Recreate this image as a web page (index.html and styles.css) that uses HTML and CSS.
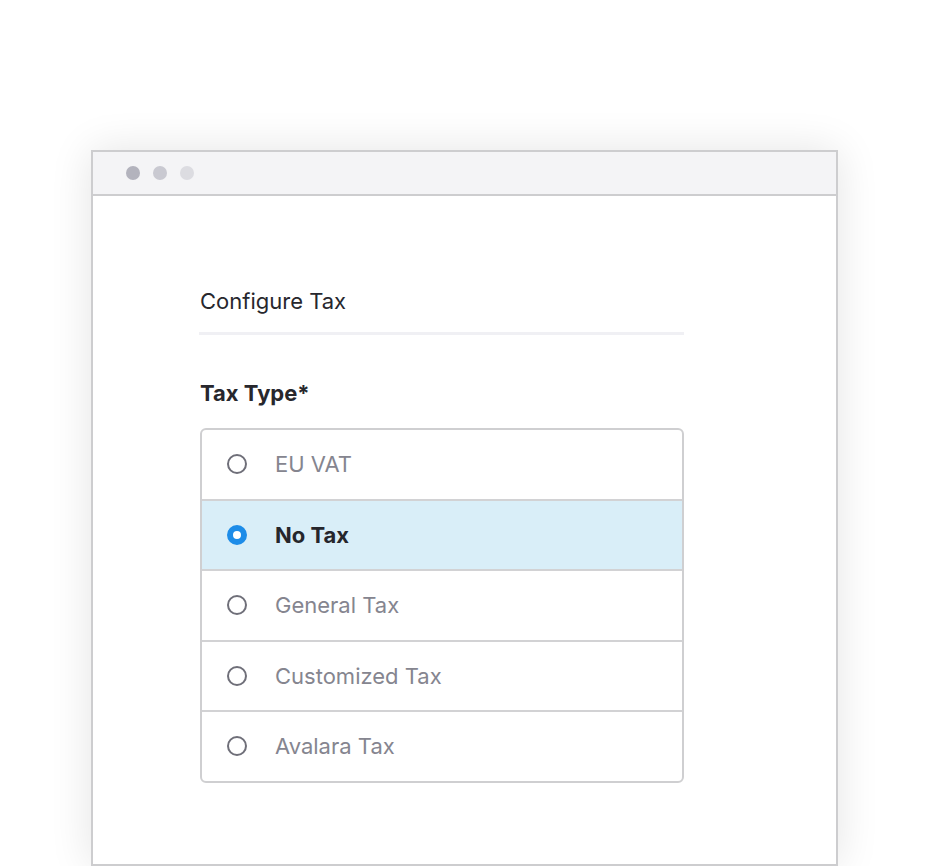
FILE: index.html
```html
<!DOCTYPE html>
<html lang="en">
<head>
<meta charset="utf-8">
<title>Configure Tax</title>
<link rel="stylesheet" href="styles.css">
</head>
<body>
<div class="window">
  <div class="titlebar">
    <span class="dot dot-1"></span>
    <span class="dot dot-2"></span>
    <span class="dot dot-3"></span>
  </div>
  <div class="content">
    <div class="section-title">Configure Tax</div>
    <div class="divider"></div>
    <div class="field-label">Tax Type*</div>
    <div class="options">
      <div class="option"><span class="radio"></span><span class="option-text">EU VAT</span></div>
      <div class="option selected"><span class="radio checked"></span><span class="option-text">No Tax</span></div>
      <div class="option"><span class="radio"></span><span class="option-text">General Tax</span></div>
      <div class="option"><span class="radio"></span><span class="option-text">Customized Tax</span></div>
      <div class="option"><span class="radio"></span><span class="option-text">Avalara Tax</span></div>
    </div>
  </div>
</div>
</body>
</html>
```
FILE: styles.css
```css
html, body {
  margin: 0;
  padding: 0;
  background: #ffffff;
  overflow: hidden;
}
body {
  font-family: Inter, "Noto Sans", "Liberation Sans", sans-serif;
  color: #26262c;
  height: 866px;
}
.window {
  box-sizing: border-box;
  margin: 150px 0 0 91px;
  width: 747px;
  height: 716px;
  border: 2px solid #cdcdcf;
  background: #ffffff;
  box-shadow: 0 0 40px rgba(0, 0, 0, 0.11);
}
.titlebar {
  box-sizing: border-box;
  height: 44px;
  background: #f4f4f6;
  border-bottom: 2px solid #cdcdcf;
  display: flex;
  align-items: center;
  gap: 13px;
  padding-left: 33px;
  padding-bottom: 1px;
}
.dot {
  width: 14px;
  height: 14px;
  border-radius: 50%;
}
.dot-1 { background: #b3b3bd; }
.dot-2 { background: #c9c9d1; }
.dot-3 { background: #dcdce1; }
.content {
  padding: 91px 0 0 106px;
  width: 485px;
}
.section-title {
  font-size: 22px;
  line-height: 28px;
  color: #27272d;
  margin-left: 1px;
}
.divider {
  margin-top: 17px;
  height: 3px;
  background: #f0f0f4;
}
.field-label {
  margin-top: 44px;
  margin-left: 1px;
  font-size: 22px;
  line-height: 28px;
  font-weight: 700;
  color: #27272d;
}
.options {
  margin-top: 21px;
  margin-left: 1px;
  border: 2px solid #cfcfd1;
  border-radius: 6px;
  overflow: hidden;
}
.option {
  height: 68.5px;
  display: flex;
  align-items: center;
  padding-left: 25px;
  gap: 28px;
  border-top: 2px solid #d2d2d4;
}
.option:first-child {
  border-top: none;
}
.option.selected {
  background: #d9eef8;
}
.radio {
  box-sizing: border-box;
  flex: none;
  width: 20px;
  height: 20px;
  border-radius: 50%;
  border: 2px solid #6f6f79;
  background: #ffffff;
}
.radio.checked {
  border: 6.5px solid #1d8ce8;
  background: #ffffff;
}
.option-text {
  font-size: 22px;
  color: #85858f;
}
.selected .option-text {
  color: #26262c;
  font-weight: 700;
}
```
